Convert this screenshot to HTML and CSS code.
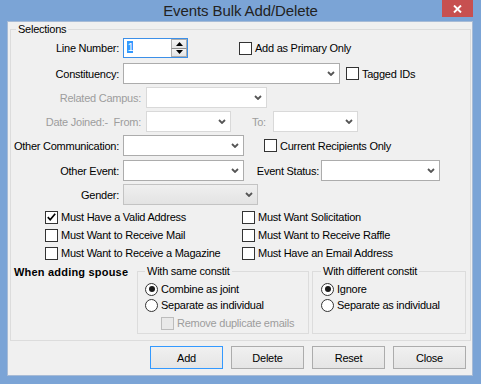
FILE: index.html
```html
<!DOCTYPE html>
<html>
<head>
<meta charset="utf-8">
<title>Events Bulk Add/Delete</title>
<link rel="stylesheet" href="styles.css">
</head>
<body>
<div class="window">
  <div class="titlebar">
    <span></span>
    <span class="title">Events Bulk Add/Delete</span>
    <span class="close"><svg width="9" height="8" viewBox="0 0 9 8"><path d="M1 0.5 L8 7.5 M8 0.5 L1 7.5" stroke="#fff" stroke-width="1.9" fill="none"/></svg></span>
  </div>
  <div class="client">
    <fieldset class="selections">
      <legend>Selections</legend>

      <div class="row r1">
        <span class="lbl w108">Line Number:</span>
        <div class="spin">
          <span class="spin-val"><span class="sel">1</span></span>
          <span class="spin-btns">
            <span class="sb up"><svg width="7" height="4" viewBox="0 0 7 4"><path d="M0 4 L3.5 0 L7 4 Z" fill="#000"/></svg></span>
            <span class="sb down"><svg width="7" height="4" viewBox="0 0 7 4"><path d="M0 0 L3.5 4 L7 0 Z" fill="#000"/></svg></span>
          </span>
        </div>
        <span class="check ml51"><span class="box"></span>Add as Primary Only</span>
      </div>

      <div class="row r2">
        <span class="lbl w108">Constituency:</span>
        <span class="combo cw217"><svg class="chev" width="8" height="5" viewBox="0 0 8 5"><path d="M1 1 L4 4 L7 1" stroke="#555" stroke-width="1.8" fill="none"/></svg></span>
        <span class="check ml6"><span class="box"></span>Tagged IDs</span>
      </div>

      <div class="row r3">
        <span class="lbl w130 dis">Related Campus:</span>
        <span class="combo cw121 off"><svg class="chev" width="8" height="5" viewBox="0 0 8 5"><path d="M1 1 L4 4 L7 1" stroke="#555" stroke-width="1.8" fill="none"/></svg></span>
      </div>

      <div class="row r4">
        <span class="lbl w130 dis">Date Joined:-&nbsp; From:</span>
        <span class="combo cw85 off"><svg class="chev" width="8" height="5" viewBox="0 0 8 5"><path d="M1 1 L4 4 L7 1" stroke="#555" stroke-width="1.8" fill="none"/></svg></span>
        <span class="lbl-to dis">To:</span>
        <span class="combo cw85 off"><svg class="chev" width="8" height="5" viewBox="0 0 8 5"><path d="M1 1 L4 4 L7 1" stroke="#555" stroke-width="1.8" fill="none"/></svg></span>
      </div>

      <div class="row r5">
        <span class="lbl w108">Other Communication:</span>
        <span class="combo cw121"><svg class="chev" width="8" height="5" viewBox="0 0 8 5"><path d="M1 1 L4 4 L7 1" stroke="#555" stroke-width="1.8" fill="none"/></svg></span>
        <span class="check ml20"><span class="box"></span>Current Recipients Only</span>
      </div>

      <div class="row r6">
        <span class="lbl w108">Other Event:</span>
        <span class="combo cw121"><svg class="chev" width="8" height="5" viewBox="0 0 8 5"><path d="M1 1 L4 4 L7 1" stroke="#555" stroke-width="1.8" fill="none"/></svg></span>
        <span class="lbl lbl-status">Event Status:</span>
        <span class="combo cw119"><svg class="chev" width="8" height="5" viewBox="0 0 8 5"><path d="M1 1 L4 4 L7 1" stroke="#555" stroke-width="1.8" fill="none"/></svg></span>
      </div>

      <div class="row r7">
        <span class="lbl w108">Gender:</span>
        <span class="combo cw135 flat"><svg class="chev" width="8" height="5" viewBox="0 0 8 5"><path d="M1 1 L4 4 L7 1" stroke="#555" stroke-width="1.8" fill="none"/></svg></span>
      </div>

      <div class="chk-rows">
        <div class="chk-row">
          <span class="check col1"><span class="box"><svg width="11" height="11" viewBox="0 0 11 11"><path d="M1.8 5.2 L4.2 7.8 L9.2 1.8" stroke="#000" stroke-width="1.7" fill="none"/></svg></span>Must Have a Valid Address</span>
          <span class="check"><span class="box"></span>Must Want Solicitation</span>
        </div>
        <div class="chk-row">
          <span class="check col1"><span class="box"></span>Must Want to Receive Mail</span>
          <span class="check"><span class="box"></span>Must Want to Receive Raffle</span>
        </div>
        <div class="chk-row">
          <span class="check col1"><span class="box"></span>Must Want to Receive a Magazine</span>
          <span class="check"><span class="box"></span>Must Have an Email Address</span>
        </div>
      </div>

      <div class="spouse">
        <span class="spouse-label">When adding spouse</span>
        <fieldset class="group g1">
          <legend>With same constit</legend>
          <div class="opt"><span class="radio on"></span>Combine as joint</div>
          <div class="opt"><span class="radio"></span>Separate as individual</div>
          <div class="opt indent dis"><span class="box boxdis"></span>Remove duplicate emails</div>
        </fieldset>
        <fieldset class="group g2">
          <legend>With different constit</legend>
          <div class="opt"><span class="radio on"></span>Ignore</div>
          <div class="opt"><span class="radio"></span>Separate as individual</div>
        </fieldset>
      </div>
    </fieldset>

    <div class="buttons">
      <button class="btn default">Add</button>
      <button class="btn">Delete</button>
      <button class="btn">Reset</button>
      <button class="btn">Close</button>
    </div>
  </div>
</div>
</body>
</html>
```
FILE: styles.css
```css
* { box-sizing: border-box; }
html, body { margin: 0; padding: 0; }
body {
  width: 481px;
  height: 384px;
  overflow: hidden;
  background: #7ba4d6;
  font-family: "Liberation Sans", Arial, sans-serif;
  font-size: 11px;
  letter-spacing: -0.25px;
  color: #000;
}
.window {
  width: 481px;
  height: 384px;
  background: #7ba4d6;
  display: flex;
  flex-direction: column;
}
.titlebar {
  height: 21px;
  display: grid;
  grid-template-columns: 1fr auto 1fr;
  flex-shrink: 0;
}
.title {
  font-size: 15px;
  letter-spacing: -0.1px;
  line-height: 22px;
  color: #222;
  white-space: nowrap;
}
.close {
  justify-self: end;
  width: 31px;
  height: 17px;
  margin-right: 8px;
  background: #c75050;
  display: flex;
  align-items: center;
  justify-content: center;
}
.client {
  margin: 0 8px 8px 7px;
  flex: 1;
  background: #f0f0f0;
  border: 1px solid #a7bbd6;
  display: flex;
  flex-direction: column;
}
.selections {
  margin: 1px 1px 0 2px;
  padding: 0 0 6px 0;
  border: 1px solid #dcdcdc;
  min-width: 0;
}
.selections > legend {
  margin-left: 5px;
  padding: 0 2px;
  line-height: 13px;
}
.row {
  display: flex;
  align-items: center;
  height: 21px;
  flex-shrink: 0;
}
.r1 { height: 20px; margin-top: 2px; }
.r2 { margin-top: 5px; }
.r3 { margin-top: 3px; }
.r4 { margin-top: 3px; }
.r5 { margin-top: 3px; }
.r6 { margin-top: 4px; }
.r7 { margin-top: 3px; }

.lbl { text-align: right; white-space: nowrap; flex-shrink: 0; }
.w108 { width: 108px; margin-right: 4px; }
.w130 { width: 130px; margin-right: 5px; }
.dis { color: #9d9d9d; }
.lbl-to { width: 21px; margin-left: 21px; }
.lbl-status { width: 66px; margin-left: 9px; margin-right: 2px; }

.combo {
  height: 21px;
  background: #fff;
  border: 1px solid #acacac;
  display: flex;
  align-items: center;
  justify-content: flex-end;
  padding-right: 4px;
  flex-shrink: 0;
}
.combo.off { border-color: #d9d9d9; }
.combo.flat {
  background: linear-gradient(#efefef, #e3e3e3);
  border-color: #c3c3c3;
}
.cw217 { width: 217px; }
.cw121 { width: 121px; }
.cw85 { width: 85px; }
.cw119 { width: 119px; }
.cw135 { width: 135px; }
.chev { display: block; }

.spin {
  width: 65px;
  height: 20px;
  border: 1px solid #3c8fe8;
  background: #fff;
  display: flex;
  flex-shrink: 0;
}
.spin-val { flex: 1; padding: 2px 0 0 3px; }
.sel {
  display: inline-block;
  height: 12px;
  line-height: 12px;
  background: #3399ff;
  color: #fff;
  padding: 0 0 0 0.5px;
}
.spin-btns { width: 16px; display: flex; flex-direction: column; }
.sb {
  flex: 1;
  border: 1px solid #acacac;
  background: linear-gradient(#f4f4f4, #e4e4e4);
  display: flex;
  align-items: center;
  justify-content: center;
}
.sb.down { border-top-color: #8c8c8c; }
.sb.up { border-bottom: none; }
.sb svg { display: block; }

.check { display: flex; align-items: center; white-space: nowrap; }
.box {
  width: 13px;
  height: 13px;
  border: 1px solid #333;
  background: #fff;
  margin-right: 3px;
  flex-shrink: 0;
  display: flex;
}
.box svg { display: block; }
.boxdis { border-color: #bcbcbc; background: #e9e9e9; }
.ml51 { margin-left: 51px; }
.ml6 { margin-left: 6px; }
.ml20 { margin-left: 20px; }

.chk-rows { padding-left: 34px; margin-top: 3px; }
.chk-row { display: flex; align-items: center; height: 18px; }
.col1 { width: 197px; }

.spouse { display: flex; margin-top: 3px; padding-left: 3px; }
.spouse-label {
  width: 123px;
  flex-shrink: 0;
  font-weight: bold;
  line-height: 13px;
  padding-top: 1px;
  letter-spacing: 0.2px;
}
.group {
  margin: 0;
  padding: 3px 0 2px 7px;
  border: 1px solid #dcdcdc;
  min-width: 0;
  flex-shrink: 0;
}
.g1 { width: 172px; }
.g2 { width: 154px; margin-left: 3px; padding-left: 8px; }
.group > legend { margin-left: 0; padding: 0 2px; line-height: 13px; }
.opt { display: flex; align-items: center; height: 16px; white-space: nowrap; }
.opt.indent { margin-left: 16px; margin-top: 2px; }
.radio {
  width: 13px;
  height: 13px;
  border: 1px solid #333;
  border-radius: 50%;
  background: #fff;
  margin-right: 3px;
  flex-shrink: 0;
  display: flex;
  align-items: center;
  justify-content: center;
}
.radio.on::after {
  content: "";
  width: 6px;
  height: 6px;
  border-radius: 50%;
  background: #1a1a1a;
}

.buttons {
  display: flex;
  justify-content: flex-end;
  gap: 8px;
  margin-top: 5px;
  padding-right: 6px;
}
.btn {
  width: 73px;
  height: 23px;
  margin: 0;
  padding: 0;
  border: 1px solid #acacac;
  background: linear-gradient(#f0f0f0, #e5e5e5);
  font-family: "Liberation Sans", Arial, sans-serif;
  font-size: 11px;
  letter-spacing: -0.25px;
  color: #000;
}
.btn.default { border-color: #3399ff; }
```
